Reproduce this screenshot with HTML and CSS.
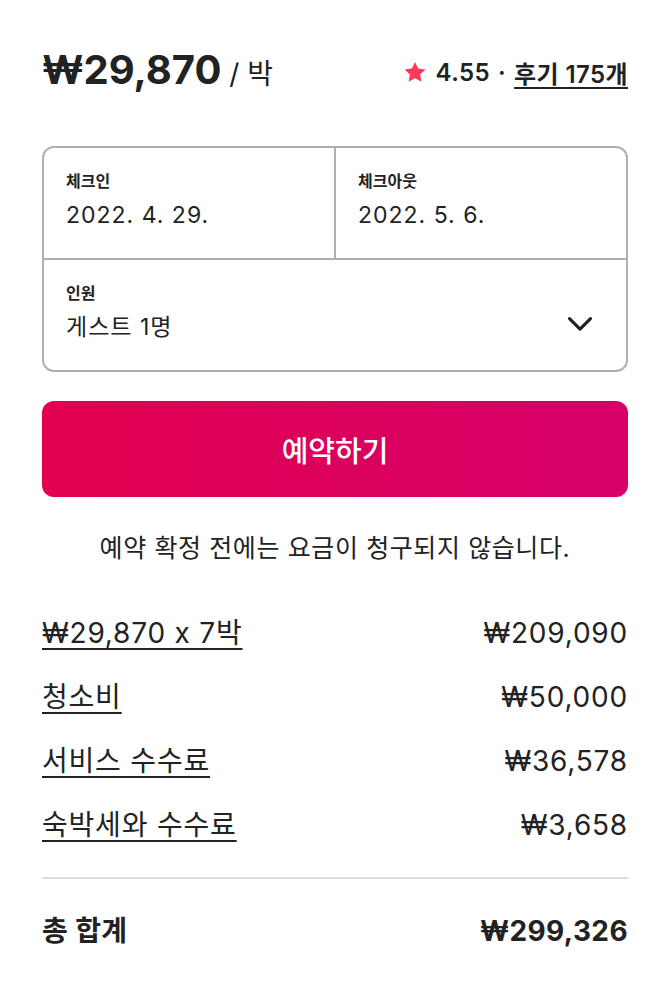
FILE: index.html
```html
<!DOCTYPE html>
<html lang="ko">
<head>
<meta charset="utf-8">
<link rel="stylesheet" href="styles.css">
</head>
<body>
<div class="card">
  <div class="header">
    <div class="price"><span class="amount">₩29,870</span><span class="per"> / 박</span></div>
    <div class="rating">
      <svg class="star" viewBox="0 0 32 32" width="24" height="24"><path d="M16 2.5l4.2 8.9 9.7 1.2-7.1 6.7 1.8 9.6L16 24.2l-8.6 4.7 1.8-9.6-7.1-6.7 9.7-1.2z" fill="#ff385c"/></svg>
      <span class="score">4.55</span><span class="dot">·</span><a class="reviews">후기 175개</a>
    </div>
  </div>
  <div class="picker">
    <div class="dates">
      <div class="field">
        <div class="label">체크인</div>
        <div class="value">2022. 4. 29.</div>
      </div>
      <div class="field field-right">
        <div class="label">체크아웃</div>
        <div class="value">2022. 5. 6.</div>
      </div>
    </div>
    <div class="field guests">
      <div>
        <div class="label">인원</div>
        <div class="value">게스트 1명</div>
      </div>
      <svg class="chevron" viewBox="0 0 32 32" width="28" height="28"><path d="M4 11l12 12 12-12" fill="none" stroke="#222" stroke-width="3.6" stroke-linecap="round" stroke-linejoin="round"/></svg>
    </div>
  </div>
  <button class="reserve">예약하기</button>
  <p class="note">예약 확정 전에는 요금이 청구되지 않습니다.</p>
  <div class="rows">
    <div class="row"><a class="row-label">₩29,870 x 7박</a><span>₩209,090</span></div>
    <div class="row"><a class="row-label">청소비</a><span>₩50,000</span></div>
    <div class="row"><a class="row-label">서비스 수수료</a><span>₩36,578</span></div>
    <div class="row"><a class="row-label">숙박세와 수수료</a><span>₩3,658</span></div>
  </div>
  <div class="total"><span>총 합계</span><span>₩299,326</span></div>
</div>
</body>
</html>
```
FILE: styles.css
```css
* { box-sizing: border-box; }
html, body { margin: 0; padding: 0; background: #fff; }
body {
  font-family: Inter, "Noto Sans CJK KR", sans-serif;
  color: #222;
}
.card {
  padding: 0 44px 0 42px;
}
.header {
  display: flex;
  justify-content: space-between;
  align-items: baseline;
  padding-top: 45px;
  height: 112px;
}
.amount {
  font-size: 40px;
  font-weight: 700;
}
.per {
  font-size: 28px;
  font-weight: 400;
}
.rating {
  display: flex;
  align-items: center;
  font-size: 24px;
  font-weight: 600;
  letter-spacing: 0.4px;
  gap: 8px;
}
.star { align-self: center; margin-right: 1px; }
.reviews {
  text-decoration: underline;
  text-decoration-thickness: 2px;
  text-underline-offset: 4px;
}
.picker {
  border: 2px solid #b0b0b0;
  border-radius: 12px;
  margin-top: 34px;
}
.dates {
  display: flex;
  border-bottom: 2px solid #b0b0b0;
}
.field {
  flex: 1;
  height: 110px;
  padding: 20px 22px 0;
}
.field-right {
  border-left: 2px solid #b0b0b0;
}
.label {
  font-size: 16px;
  font-weight: 700;
  line-height: 26px;
}
.value {
  font-size: 23px;
  line-height: 38px;
  margin-top: 2px;
  letter-spacing: 1px;
}
.guests {
  display: flex;
  justify-content: space-between;
  align-items: flex-start;
  padding-right: 32px;
}
.chevron {
  align-self: center;
  margin-bottom: 4px;
}
.reserve {
  display: block;
  width: 100%;
  height: 96px;
  margin-top: 29px;
  border: 0;
  border-radius: 12px;
  background: linear-gradient(to right, #e2004f, #d6006a);
  color: #fff;
  font-family: inherit;
  font-size: 29px;
  font-weight: 500;
}
.note {
  margin: 0;
  text-align: center;
  font-size: 25px;
  line-height: 34px;
  letter-spacing: 0.6px;
  padding-top: 34px;
}
.rows {
  padding-top: 48px;
  padding-bottom: 8px;
  border-bottom: 2px solid #ddd;
}
.row {
  display: flex;
  justify-content: space-between;
  font-size: 28px;
  line-height: 40px;
  letter-spacing: 0.8px;
  margin-bottom: 24px;
}
.row-label {
  text-decoration: underline;
  text-decoration-thickness: 2px;
  text-underline-offset: 5px;
}
.total {
  display: flex;
  justify-content: space-between;
  font-size: 28px;
  font-weight: 700;
  line-height: 40px;
  letter-spacing: 0.4px;
  padding-top: 32px;
}
```
